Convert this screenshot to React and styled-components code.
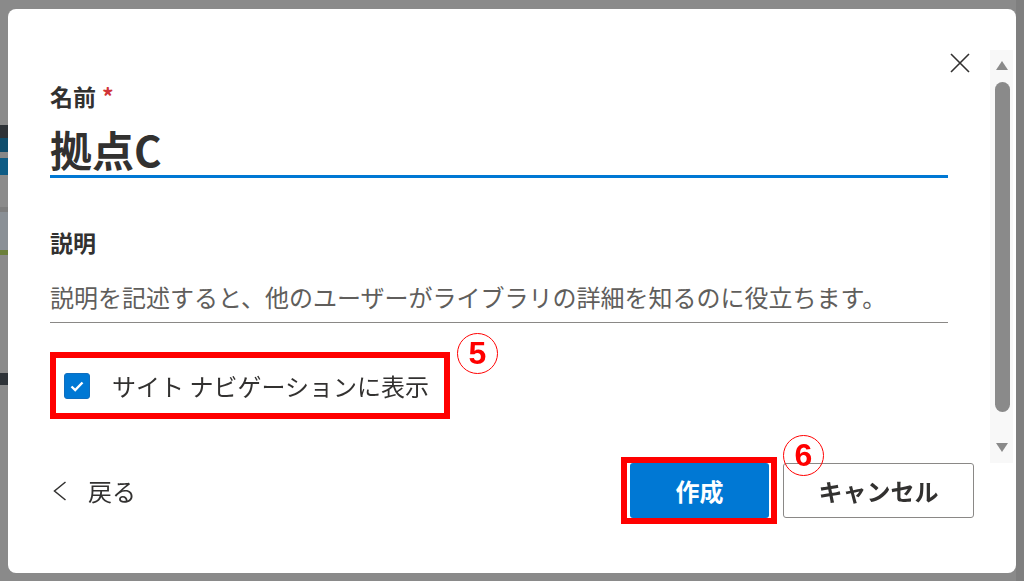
import React from "react";
import styled, { createGlobalStyle } from "styled-components";

const GlobalStyle = createGlobalStyle`
  html, body {
    margin: 0;
    padding: 0;
    height: 100%;
    overflow: hidden;
  }
  body {
    font-family: "Noto Sans CJK JP", "Noto Sans", sans-serif;
    color: #323130;
  }
  * { box-sizing: border-box; }
`;

const Backdrop = styled.div`
  width: 100vw;
  height: 100vh;
  display: flex;
  background: #8a8a8a;
`;

const BehindStrip = styled.div`
  width: 8px;
  display: flex;
  flex-direction: column;
`;

const Bar = styled.div`
  height: ${(p) => p.$h}px;
  background: ${(p) => p.$c};
  flex-shrink: 0;
`;

const BehindFill = styled.div`
  flex: 1;
`;

const RightStrip = styled.div`
  width: 8px;
  background: #7f7f7f;
`;

const Dialog = styled.div`
  position: fixed;
  top: 9px;
  left: 8px;
  width: 1008px;
  height: 564px;
  background: #ffffff;
  border-radius: 8px;
  display: flex;
  overflow: hidden;
`;

const Content = styled.div`
  flex: 1;
  display: flex;
  flex-direction: column;
  padding: 0 42px;
`;

const Header = styled.div`
  display: flex;
  justify-content: flex-end;
  padding-top: 44px;
  margin-right: -22px;
`;

const CloseButton = styled.button`
  width: 20px;
  height: 20px;
  padding: 0;
  border: none;
  background: none;
  display: flex;
`;

const FieldLabel = styled.div`
  font-size: 23px;
  font-weight: 700;
  line-height: 32px;
  color: #323130;
  margin-top: ${(p) => p.$mt}px;
`;

const Required = styled.span`
  color: #d13438;
  margin-left: 6px;
`;

const TitleInput = styled.div`
  font-size: 42px;
  font-weight: 600;
  line-height: 52px;
  color: #323130;
  margin-top: 11px;
  border-bottom: 3px solid #0078d4;
`;

const DescInput = styled.div`
  font-size: 24px;
  line-height: 32px;
  color: #605e5c;
  margin-top: 23px;
  padding-bottom: 9px;
  border-bottom: 1px solid #8a8886;
`;

const Annotated = styled.div`
  position: relative;
  display: flex;
  align-self: flex-start;
  border: 6px solid #ff0000;
  padding: ${(p) => p.$pad || "0"};
  margin-top: ${(p) => p.$mt || 0}px;
`;

const Badge = styled.span`
  position: absolute;
  left: ${(p) => p.$left}px;
  top: ${(p) => p.$top}px;
  width: 41px;
  height: 41px;
  border: 1.5px solid #ff0000;
  border-radius: 50%;
  color: #ff0000;
  font-family: "Liberation Sans", Arial, sans-serif;
  font-weight: 700;
  font-size: 32px;
  line-height: 38px;
  text-align: center;
`;

const CheckRow = styled.label`
  display: flex;
  align-items: center;
  width: 388px;
  height: 55px;
  padding-left: 8px;
  gap: 22px;
  font-size: 24px;
  color: #323130;
`;

const CheckBox = styled.span`
  width: 26px;
  height: 26px;
  border-radius: 3px;
  background: #0078d4;
  border: 1px solid #106ebe;
  display: flex;
  align-items: center;
  justify-content: center;
`;

const Footer = styled.div`
  display: flex;
  align-items: center;
  justify-content: space-between;
  margin-top: 38px;
  margin-right: -26px;
`;

const BackButton = styled.button`
  display: flex;
  align-items: center;
  gap: 21px;
  padding: 0 0 0 3px;
  border: none;
  background: none;
  font-family: inherit;
  font-size: 24px;
  color: #323130;
`;

const Actions = styled.div`
  display: flex;
  align-items: center;
  gap: 6px;
`;

const PrimaryButton = styled.button`
  width: 139px;
  height: 55px;
  border: none;
  border-radius: 3px;
  background: #0078d4;
  color: #ffffff;
  font-family: inherit;
  font-size: 24px;
  font-weight: 700;
`;

const DefaultButton = styled.button`
  width: 191px;
  height: 55px;
  border: 1px solid #8a8886;
  border-radius: 3px;
  background: #ffffff;
  color: #323130;
  font-family: inherit;
  font-size: 24px;
  font-weight: 700;
`;

const ScrollColumn = styled.div`
  width: 26px;
  padding: 41px 3px 0 0;
`;

const Track = styled.div`
  width: 23px;
  height: 413px;
  background: #f8f8f8;
  display: flex;
  flex-direction: column;
  align-items: center;
  padding-top: 11px;
`;

const Thumb = styled.div`
  width: 15px;
  height: 330px;
  margin-top: 12px;
  margin-left: 1px;
  border-radius: 8px;
  background: #8a8a8a;
`;

const ArrowIcon = styled.svg`
  margin-top: ${(p) => p.$mt || 0}px;
  display: block;
`;

const behindBars = [
  [125, "#8a8a8a"],
  [13, "#2d3237"],
  [14, "#0f4d6c"],
  [6, "#878787"],
  [17, "#0e5c85"],
  [32, "#8b8b8b"],
  [5, "#7e7e7e"],
  [38, "#8a9096"],
  [5, "#6b7f3a"],
  [118, "#8a8a8a"],
  [12, "#2e3338"],
];

export default function App() {
  return (
    <>
      <GlobalStyle />
      <Backdrop>
        <BehindStrip>
          {behindBars.map(([h, c], i) => (
            <Bar key={i} $h={h} $c={c} />
          ))}
        </BehindStrip>
        <BehindFill />
        <RightStrip />
      </Backdrop>
      <Dialog>
        <Content>
          <Header>
            <CloseButton aria-label="閉じる">
              <svg width="20" height="20" viewBox="0 0 20 20">
                <path d="M1 1 L19 19 M19 1 L1 19" stroke="#323130" strokeWidth="1.6" fill="none" />
              </svg>
            </CloseButton>
          </Header>
          <FieldLabel $mt={7}>
            名前<Required>*</Required>
          </FieldLabel>
          <TitleInput>拠点C</TitleInput>
          <FieldLabel $mt={48}>説明</FieldLabel>
          <DescInput>説明を記述すると、他のユーザーがライブラリの詳細を知るのに役立ちます。</DescInput>
          <Annotated $mt={29}>
            <CheckRow>
              <CheckBox>
                <svg width="16" height="16" viewBox="0 0 16 16">
                  <path d="M2.5 8.5 L6.2 12 L13.5 4.5" stroke="#ffffff" strokeWidth="2.4" fill="none" />
                </svg>
              </CheckBox>
              サイト ナビゲーションに表示
            </CheckRow>
            <Badge $left={401} $top={-25}>5</Badge>
          </Annotated>
          <Footer>
            <BackButton>
              <svg width="14" height="20" viewBox="0 0 14 20">
                <path d="M12.5 1 L1.5 10 L12.5 19" stroke="#323130" strokeWidth="1.5" fill="none" />
              </svg>
              戻る
            </BackButton>
            <Actions>
              <Annotated $pad="0 2px 0 3px">
                <PrimaryButton>作成</PrimaryButton>
                <Badge $left={156} $top={-28}>6</Badge>
              </Annotated>
              <DefaultButton>キャンセル</DefaultButton>
            </Actions>
          </Footer>
        </Content>
        <ScrollColumn>
          <Track>
            <ArrowIcon width="12" height="9" viewBox="0 0 12 9">
              <path d="M6 0 L12 9 L0 9 Z" fill="#8a8a8a" />
            </ArrowIcon>
            <Thumb />
            <ArrowIcon $mt={31} width="12" height="9" viewBox="0 0 12 9">
              <path d="M0 0 L12 0 L6 9 Z" fill="#8a8a8a" />
            </ArrowIcon>
          </Track>
        </ScrollColumn>
      </Dialog>
    </>
  );
}
